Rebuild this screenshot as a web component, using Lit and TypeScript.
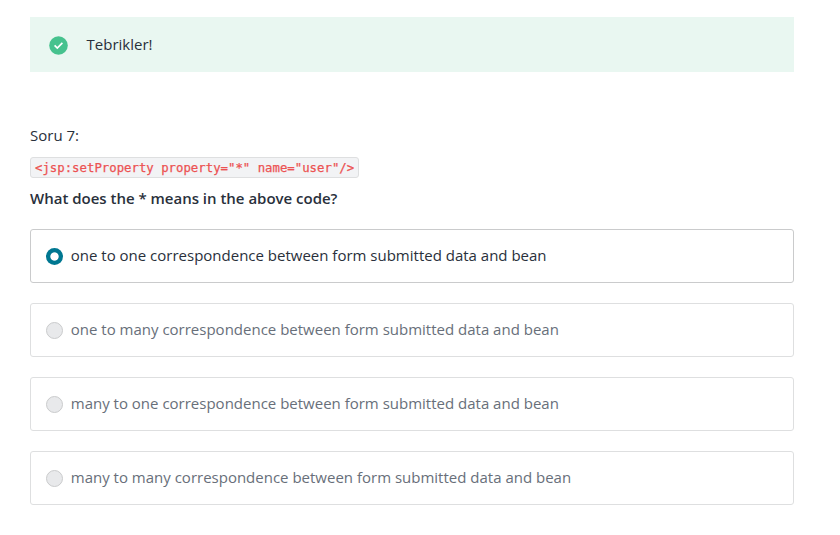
import { LitElement, html, css } from "lit";
import { customElement, property } from "lit/decorators.js";

@customElement("answer-option")
class AnswerOption extends LitElement {
  @property() label = "";
  @property({ type: Boolean }) selected = false;

  static styles = css`
    :host { display: block; }
    .option {
      box-sizing: border-box;
      height: 54px;
      display: flex;
      align-items: flex-start;
      padding: 0 15px;
      border: 1px solid #dedfe0;
      border-radius: 3px;
      color: #686f7a;
    }
    .option.selected { border-color: #cacbcc; color: #29303b; }
    .radio {
      box-sizing: border-box;
      width: 17px;
      height: 17px;
      margin: 18px 7.75px 0 0;
      border: 1px solid #cacbcc;
      border-radius: 50%;
      background: #e8e9eb;
    }
    .label { margin-top: 15px; }
    .selected .radio {
      border: 0;
      background: radial-gradient(circle, #fff 3.7px, #007791 4.6px);
    }
  `;

  render() {
    return html`<div class="option ${this.selected ? "selected" : ""}">
      <span class="radio"></span><span class="label">${this.label}</span>
    </div>`;
  }
}

@customElement("app-root")
class AppRoot extends LitElement {
  static styles = css`
    :host {
      display: block;
      box-sizing: border-box;
      height: 535px;
      padding: 17px 46px 0 30px;
      background: #fff;
      color: #29303b;
      font: 15px/21px "Open Sans", sans-serif;
    }
    .alert {
      display: flex;
      align-items: center;
      height: 55px;
      padding-left: 19px;
      background: #e9f7f1;
    }
    .alert svg { display: block; margin: 1px 18.6px 0 0; }
    .number { margin-top: 53px; }
    .code { margin-top: 11px; height: 21px; display: flex; }
    code {
      box-sizing: border-box;
      height: 21px;
      padding: 0 4px;
      border: 1px solid #dedfe0;
      border-radius: 3px;
      background: #f2f3f5;
      color: #ec5252;
      font: 12.33px/21px "DejaVu Sans Mono", monospace;
      -webkit-text-stroke: 0.25px #ec5252;
      white-space: pre;
    }
    .question { margin-top: 10px; font-weight: 600; letter-spacing: -0.01px; }
    .options { display: grid; gap: 20px; margin-top: 20px; }
  `;

  private options = [
    "one to one correspondence between form submitted data and bean",
    "one to many correspondence between form submitted data and bean",
    "many to one correspondence between form submitted data and bean",
    "many to many correspondence between form submitted data and bean",
  ];

  render() {
    return html`
      <div class="alert">
        <svg width="19" height="19" viewBox="0 0 19 19">
          <circle cx="9.5" cy="9.5" r="9.3" fill="#46c28e" />
          <path d="M5.6 9.3l2.7 2.7 5.1-5.1" fill="none" stroke="#fff" stroke-width="1.7" />
        </svg>
        <span>Tebrikler!</span>
      </div>
      <div class="number">Soru 7:</div>
      <div class="code"><code>&lt;jsp:setProperty property="*" name="user"/&gt;</code></div>
      <div class="question">What does the * means in the above code?</div>
      <div class="options">
        ${this.options.map(
          (label, i) => html`<answer-option .label=${label} .selected=${i === 0}></answer-option>`
        )}
      </div>
    `;
  }
}
